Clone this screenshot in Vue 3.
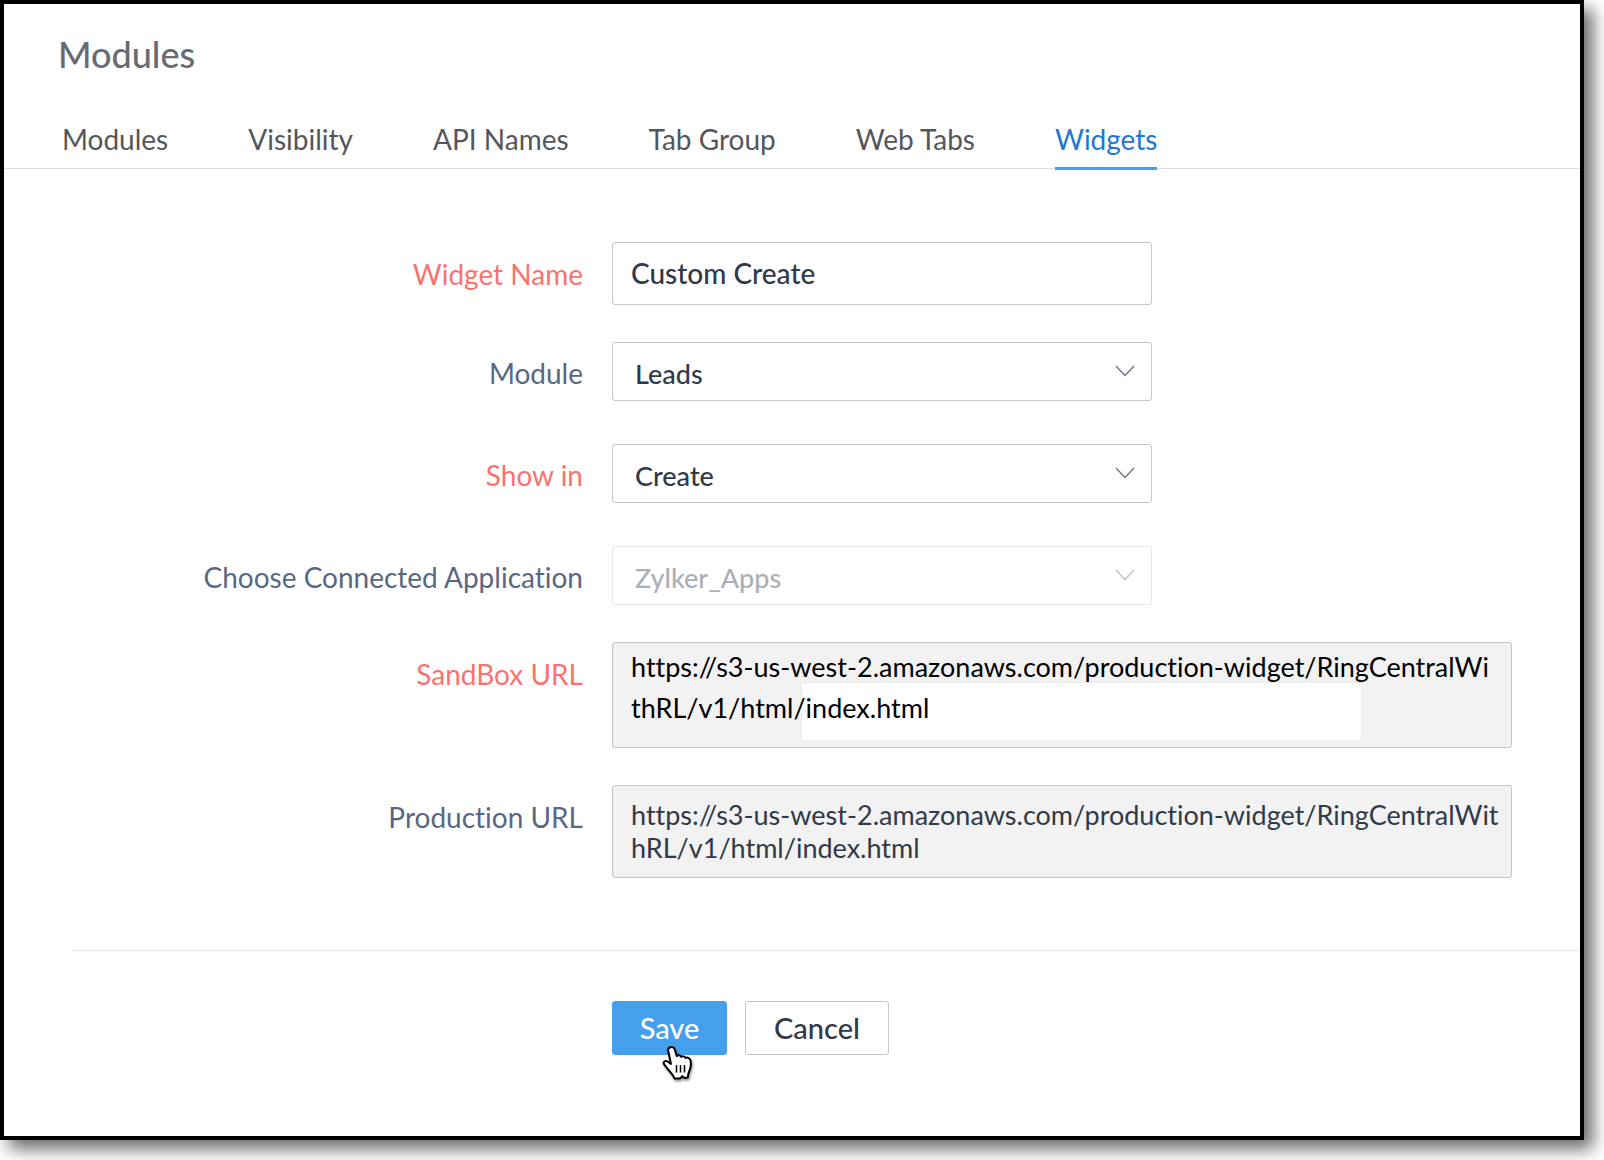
<template>
  <div class="page">
    <main class="panel">
      <h1>Modules</h1>

      <nav class="tabs">
        <a
          v-for="tab in tabs"
          :key="tab"
          href="#"
          class="tab"
          :class="{ active: tab === activeTab }"
          @click.prevent="activeTab = tab"
        >{{ tab }}</a>
      </nav>

      <form @submit.prevent>
        <div class="fields">
          <div class="row">
            <label for="widget-name" class="required">Widget Name</label>
            <input id="widget-name" v-model="form.name" type="text" class="control" />
          </div>

          <div v-for="field in selects" :key="field.id" class="row select-row">
            <label :for="field.id" :class="{ required: field.required }">{{ field.label }}</label>
            <div class="select-wrap" :class="{ disabled: field.disabled }">
              <select :id="field.id" v-model="form[field.id]" class="control" :disabled="field.disabled">
                <option v-for="option in field.options" :key="option">{{ option }}</option>
              </select>
              <svg class="chevron" width="20" height="12" viewBox="0 0 20 12" fill="none">
                <path d="M1 1 L10 10.5 L19 1" stroke="currentColor" stroke-width="1.3" />
              </svg>
            </div>
          </div>

          <div class="row">
            <label for="sandbox-url" class="required">SandBox URL</label>
            <div class="url-box sandbox">
              <span class="patch"></span>
              <textarea id="sandbox-url" v-model="form.sandboxUrl" spellcheck="false"></textarea>
            </div>
          </div>

          <div class="row">
            <label for="production-url">Production URL</label>
            <div class="url-box production">
              <textarea id="production-url" v-model="form.productionUrl" spellcheck="false"></textarea>
            </div>
          </div>
        </div>

        <div class="actions">
          <button type="submit" class="btn btn-save">
            Save
            <svg class="pointer" width="34" height="38" viewBox="0 0 34 38">
              <path
                d="M9.5 2.2c2-.7 3.700.4 4.200 2.300l2 6.500c1.300-1.200 3.600-.8 4.500.8 1.500-1 3.500-.5 4.300 1.100 1.800-1 4.300 0 4.900 2.200.9 3.500.5 7-.7 10-.9 2.200-1.700 3.800-1.900 7.400l-3.600.4-1.800-1.800-2.300 2.300h-5.600c-1.300-3.500-3.500-5.300-5.800-8.300-1.900-2.500-3.500-4.300-4.700-6-1.300-1.900 1.200-4 3.700-2.600l3.300 2.500L7.200 5.700C6.700 4 7.800 2.700 9.500 2.200z"
                fill="#fff"
                stroke="#000"
                stroke-width="2"
                stroke-linejoin="round"
              />
              <path d="M15.500 20v7.500M19.500 20v7.500M23.500 20v7.500" stroke="#000" stroke-width="1.500" />
            </svg>
          </button>
          <button type="button" class="btn btn-cancel">Cancel</button>
        </div>
      </form>
    </main>
  </div>
</template>

<script setup>
import { ref, reactive } from 'vue'

const tabs = ['Modules', 'Visibility', 'API Names', 'Tab Group', 'Web Tabs', 'Widgets']
const activeTab = ref('Widgets')

const selects = [
  { id: 'module', label: 'Module', options: ['Leads'] },
  { id: 'showIn', label: 'Show in', options: ['Create'], required: true },
  { id: 'app', label: 'Choose Connected Application', options: ['Zylker_Apps'], disabled: true }
]

const widgetUrl = 'https://s3-us-west-2.amazonaws.com/production-widget/RingCentralWithRL/v1/html/index.html'

const form = reactive({
  name: 'Custom Create',
  module: 'Leads',
  showIn: 'Create',
  app: 'Zylker_Apps',
  sandboxUrl: widgetUrl,
  productionUrl: widgetUrl
})
</script>

<style>
body {
  margin: 0;
  background: #fff;
}
</style>

<style scoped>
.page {
  box-sizing: border-box;
  min-height: 100vh;
  padding: 0 20px 20px 0;
  display: flex;
  overflow: hidden;
  font-family: Lato, "Liberation Sans", sans-serif;
  font-size: 28px;
  font-variant-ligatures: none;
  color: #313949;
}

.panel {
  flex: 1;
  box-sizing: border-box;
  border: 4px solid #000;
  background: #fff;
  box-shadow: 9px 9px 16px rgba(0, 0, 0, 0.58);
}

h1 {
  margin: 0;
  padding: 28px 54px 0;
  font-size: 36px;
  line-height: 44px;
  font-weight: 500;
  color: #6a6b70;
}

.tabs {
  display: flex;
  gap: 80px;
  margin-top: 45px;
  padding: 0 58px;
  border-bottom: 1px solid #dcdcdc;
}

.tab {
  padding-bottom: 10px;
  margin-bottom: -2px;
  border-bottom: 3px solid transparent;
  line-height: 36px;
  color: #55565b;
  text-decoration: none;
}

.tab.active {
  color: #2376d1;
  border-bottom-color: #44a0ea;
}

.fields {
  display: flex;
  flex-direction: column;
  gap: 37px;
  margin-left: 68px;
  padding: 73px 68px 72px 0;
  border-bottom: 1px solid #e8e8e8;
}

.row {
  display: grid;
  grid-template-columns: 511px 1fr;
  column-gap: 29px;
}

.select-row + .select-row {
  margin-top: 6px;
}

label {
  padding-top: 14px;
  line-height: 36px;
  text-align: right;
  color: #5a6782;
}

.select-row label {
  padding-top: 13px;
}

label.required {
  color: #f7736e;
}

.control {
  box-sizing: border-box;
  width: 60%;
  height: 63px;
  padding: 0 18px 2px;
  border: 1px solid #c5c5cc;
  border-radius: 3px;
  background: #fff;
  font: inherit;
  font-weight: 500;
  font-variant-ligatures: none;
  color: inherit;
  outline: none;
}

.select-wrap {
  position: relative;
  width: 60%;
}

.select-wrap .control {
  display: block;
  width: 100%;
  height: 59px;
  padding: 4px 22px 0;
  font-size: 27px;
  appearance: none;
  opacity: 1;
}

.chevron {
  position: absolute;
  right: 17px;
  top: 23px;
  color: #6c7284;
  pointer-events: none;
}

.select-wrap.disabled .control {
  border-color: #e6e6e9;
  color: #acafb5;
}

.select-wrap.disabled .chevron {
  color: #c0c3ca;
}

.url-box {
  position: relative;
  box-sizing: border-box;
  border: 1px solid #c5c5cc;
  border-radius: 3px;
  background: #f2f2f2;
}

.url-box textarea {
  position: relative;
  display: block;
  box-sizing: border-box;
  width: 100%;
  height: 100%;
  border: none;
  background: transparent;
  font: inherit;
  font-size: 27px;
  font-variant-ligatures: none;
  color: inherit;
  word-break: break-all;
  resize: none;
  overflow: hidden;
  outline: none;
}

.sandbox {
  height: 106px;
  color: #000;
}

.sandbox textarea {
  padding: 3px 18px 0 18px;
  line-height: 41px;
}

.patch {
  position: absolute;
  left: 188px;
  top: 39px;
  box-sizing: border-box;
  width: 561px;
  height: 59px;
  border: 1px solid #ececec;
  background: #fff;
}

.production {
  height: 93px;
}

.production textarea {
  padding: 12px 6px 0 18px;
  line-height: 33px;
}

.actions {
  display: flex;
  gap: 18px;
  margin-left: 608px;
  padding: 50px 0 80px;
}

.btn {
  position: relative;
  box-sizing: border-box;
  height: 54px;
  min-width: 115px;
  padding: 0 24px 2px;
  border: 1px solid #c5c5cc;
  border-radius: 3px;
  background: #fff;
  font: inherit;
  font-size: 29px;
  font-weight: 500;
  color: inherit;
  cursor: pointer;
}

.btn-cancel {
  min-width: 144px;
}

.btn-save {
  border-color: #44a0ea;
  background: #44a0ea;
  color: #fff;
}

.pointer {
  position: absolute;
  left: 48px;
  top: 43px;
  filter: drop-shadow(1px 2px 1px rgba(0, 0, 0, 0.4));
}
</style>
